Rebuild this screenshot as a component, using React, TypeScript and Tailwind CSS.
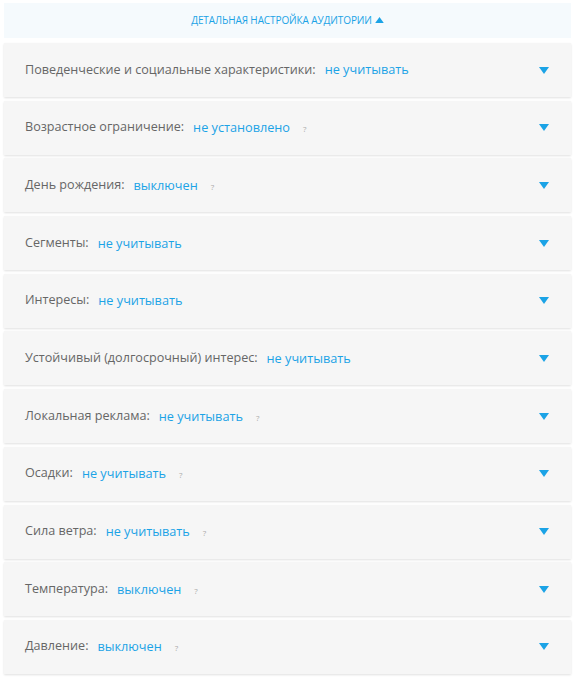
const rows = [
  { label: "Поведенческие и социальные характеристики:", value: "не учитывать", hint: false },
  { label: "Возрастное ограничение:", value: "не установлено", hint: true },
  { label: "День рождения:", value: "выключен", hint: true },
  { label: "Сегменты:", value: "не учитывать", hint: false },
  { label: "Интересы:", value: "не учитывать", hint: false },
  { label: "Устойчивый (долгосрочный) интерес:", value: "не учитывать", hint: false },
  { label: "Локальная реклама:", value: "не учитывать", hint: true },
  { label: "Осадки:", value: "не учитывать", hint: true },
  { label: "Сила ветра:", value: "не учитывать", hint: true },
  { label: "Температура:", value: "выключен", hint: true },
  { label: "Давление:", value: "выключен", hint: true },
];

function Caret({ up = false, className = "" }: { up?: boolean; className?: string }) {
  return (
    <svg width="10" height="7" viewBox="0 0 10 7" className={className}>
      <path d={up ? "M0 7 L5 0 L10 7 Z" : "M0 0 L10 0 L5 7 Z"} fill="#1ba3e6" />
    </svg>
  );
}

export default function App() {
  return (
    <div className="w-[575px] h-[679px] bg-white px-1 pt-[3px] font-['Open_Sans',sans-serif]">
      {/* Header toggle */}
      <div className="h-[35px] bg-[#f5fafd] flex items-center justify-center gap-[3px]">
        <span className="text-[10px] uppercase text-[#1ba3e6] tracking-[-0.1px]">Детальная настройка аудитории</span>
        <Caret up className="w-[9px] h-[6px] mb-[1px]" />
      </div>

      {/* Settings rows */}
      <div className="mt-[5px] flex flex-col gap-[3.7px]">
        {rows.map((row) => (
          <div
            key={row.label}
            className="h-[54px] bg-[#f6f6f6] shadow-[0_1px_2px_rgba(0,0,0,0.12)] flex items-center pl-[21px] pr-[22px]"
          >
            <span className="text-[12.6px] text-[#666666]">{row.label}</span>
            <span className="text-[12.7px] text-[#1ba3e6] ml-[9px]">{row.value}</span>
            {row.hint && <span className="text-[8px] text-[#aaaaaa] ml-[13px] mt-[3px]">?</span>}
            <Caret className="ml-auto" />
          </div>
        ))}
      </div>
    </div>
  );
}
